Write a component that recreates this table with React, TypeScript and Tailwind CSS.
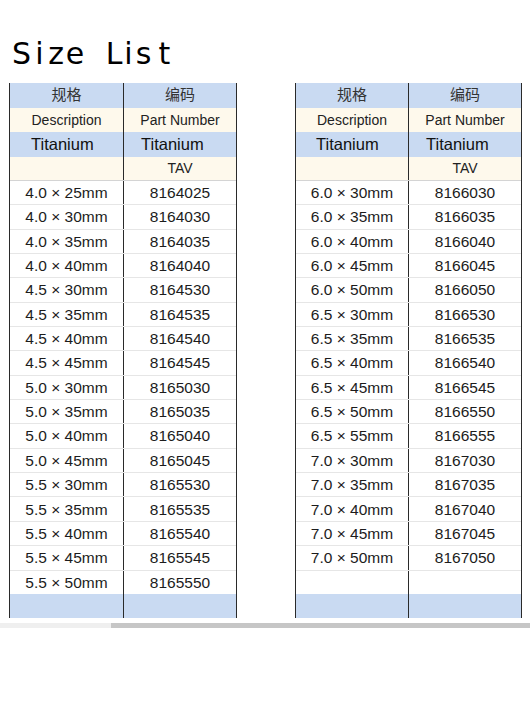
import React from "react";

const leftRows: [string, string][] = [
  ["4.0", "25", "8164025"],
  ["4.0", "30", "8164030"],
  ["4.0", "35", "8164035"],
  ["4.0", "40", "8164040"],
  ["4.5", "30", "8164530"],
  ["4.5", "35", "8164535"],
  ["4.5", "40", "8164540"],
  ["4.5", "45", "8164545"],
  ["5.0", "30", "8165030"],
  ["5.0", "35", "8165035"],
  ["5.0", "40", "8165040"],
  ["5.0", "45", "8165045"],
  ["5.5", "30", "8165530"],
  ["5.5", "35", "8165535"],
  ["5.5", "40", "8165540"],
  ["5.5", "45", "8165545"],
  ["5.5", "50", "8165550"],
].map(([a, b, c]) => [`${a} × ${b}mm`, c] as [string, string]);

const rightRows: [string, string][] = [
  ["6.0", "30", "8166030"],
  ["6.0", "35", "8166035"],
  ["6.0", "40", "8166040"],
  ["6.0", "45", "8166045"],
  ["6.0", "50", "8166050"],
  ["6.5", "30", "8166530"],
  ["6.5", "35", "8166535"],
  ["6.5", "40", "8166540"],
  ["6.5", "45", "8166545"],
  ["6.5", "50", "8166550"],
  ["6.5", "55", "8166555"],
  ["7.0", "30", "8167030"],
  ["7.0", "35", "8167035"],
  ["7.0", "40", "8167040"],
  ["7.0", "45", "8167045"],
  ["7.0", "50", "8167050"],
].map(([a, b, c]) => [`${a} × ${b}mm`, c] as [string, string]);

function Table({
  rows,
  wide,
}: {
  rows: [string, string][];
  wide: boolean;
}) {
  const grid = wide
    ? "grid grid-cols-[114px_1fr]"
    : "grid grid-cols-[113px_1fr]";
  const c1 = "flex items-center justify-center border-r border-[#2a2a2a]";
  const c2 = "flex items-center justify-center";
  const filled = [...rows];
  while (filled.length < 17) filled.push(["", ""]);
  return (
    <div
      className={
        (wide ? "w-[228px]" : "w-[227px]") +
        " border-x border-[#2a2a2a] text-[#1c1c1c]"
      }
    >
      <div className={grid + " h-[25px] bg-[#c9daf2] text-[15px] text-[#333]"}>
        <div className={c1}>规格</div>
        <div className={c2}>编码</div>
      </div>
      <div className={grid + " h-[24px] bg-[#fef9ec] text-[14px] text-[#222]"}>
        <div className={c1}>Description</div>
        <div className={c2}>Part Number</div>
      </div>
      <div className={grid + " h-[25px] bg-[#c9daf2] text-[16.5px] text-[#111]"}>
        <div
          className={
            "flex items-center border-r border-[#2a2a2a] " +
            (wide ? "pl-[21px]" : "pl-[20px]")
          }
        >
          Titanium
        </div>
        <div className="flex items-center pl-[17px]">Titanium</div>
      </div>
      <div className={grid + " h-[23px] bg-[#fef9ec] text-[14px] text-[#222]"}>
        <div className={c1}></div>
        <div className={c2}>TAV</div>
      </div>
      {filled.map(([d, p], i) => (
        <div
          key={i}
          className={
            grid +
            " h-[24.35px] bg-white text-[15.5px] border-t " +
            (i === 0 ? "border-[#d4d4d4]" : "border-[#e6e6e6]")
          }
        >
          <div className={c1}>{d}</div>
          <div className={c2}>{p}</div>
        </div>
      ))}
      <div className={grid + " h-[24px] bg-[#c9daf2]"}>
        <div className={c1}></div>
        <div className={c2}></div>
      </div>
    </div>
  );
}

const titleLetters: [string, string][] = [
  ["S", "w-[19px]"],
  ["i", "w-[17px]"],
  ["z", "w-[16px]"],
  ["e", "w-[22px]"],
  ["\u00a0", "w-[18px]"],
  ["L", "w-[20px]"],
  ["i", "w-[9px]"],
  ["s", "w-[21px]"],
  ["t", "w-[21px]"],
];

export default function App() {
  return (
    <div
      className="w-[530px] h-[709px] bg-white overflow-hidden"
      style={{ fontFamily: '"Liberation Sans", "Noto Sans CJK SC", Arial, sans-serif' }}
    >
      <div className="pt-[39px] pl-[12px]">
        <div
          className="flex h-[30px] leading-[30px] text-[30px] text-black"
          style={{ fontFamily: '"DejaVu Sans", sans-serif' }}
        >
          {titleLetters.map(([ch, w], i) => (
            <span key={i} className={w + " text-center"}>
              {ch}
            </span>
          ))}
        </div>
      </div>
      <div className="mt-[14px] pl-[9px] flex gap-[58px]">
        <Table rows={leftRows} wide={true} />
        <Table rows={rightRows} wide={false} />
      </div>
      <div className="mt-[5px] flex h-[5px]">
        <div className="w-[111px] bg-[#efefef]"></div>
        <div className="flex-1 bg-[#c6c6c6]"></div>
      </div>
    </div>
  );
}
